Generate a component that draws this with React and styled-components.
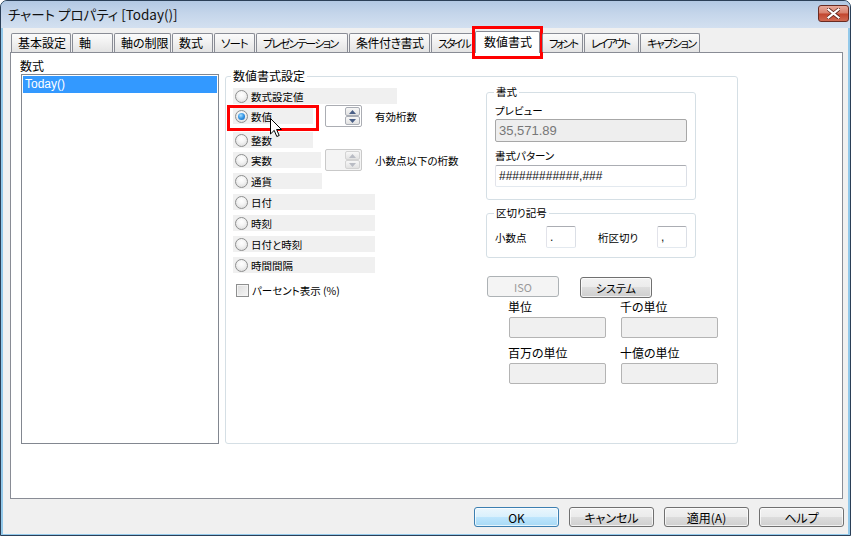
import React from 'react';
import styled, { createGlobalStyle, css } from 'styled-components';

const GlobalStyle = createGlobalStyle`
  html, body {
    margin: 0;
    padding: 0;
    background: #fff;
  }
  body {
    font-family: "Noto Sans CJK JP", "Noto Sans", sans-serif;
    font-size: 12px;
    color: #000;
    font-feature-settings: "palt";
  }
  * {
    box-sizing: border-box;
  }
`;

const tabs = [
  { label: '基本設定', w: 61 },
  { label: '軸', w: 42 },
  { label: '軸の制限', w: 58 },
  { label: '数式', w: 42 },
  { label: 'ソート', w: 42, fs: 11.5, ls: -1 },
  { label: 'プレゼンテーション', w: 93, fs: 11, ls: -1.6 },
  { label: '条件付き書式', w: 82, ls: -0.5 },
  { label: 'スタイル', w: 44, fs: 11, ls: -2 },
  { label: '数値書式', w: 65, active: true },
  { label: 'フォント', w: 42, fs: 11, ls: -2 },
  { label: 'レイアウト', w: 56, fs: 11, ls: -2 },
  { label: 'キャプション', w: 61, fs: 11, ls: -1.5 },
];

const options = [
  { label: '数式設定値', w: 164, mt: 0 },
  { label: '数値', w: 80, mt: 4, checked: true, spin: 'on', note: '有効桁数', mark: true },
  { label: '整数', w: 80, mt: 8 },
  { label: '実数', w: 88, mt: 4, spin: 'off', note: '小数点以下の桁数' },
  { label: '通貨', w: 89, mt: 5 },
  { label: '日付', w: 142, mt: 5 },
  { label: '時刻', w: 142, mt: 5 },
  { label: '日付と時刻', w: 142, mt: 5 },
  { label: '時間間隔', w: 142, mt: 5 },
];

const units = [
  { label: '単位', mt: 0 },
  { label: '千の単位', mt: 0 },
  { label: '百万の単位', mt: 8 },
  { label: '十億の単位', mt: 8 },
];

const Window = styled.div`
  width: 851px;
  height: 536px;
  border: 1px solid #2b3f57;
  border-radius: 7px 7px 0 0;
  background: #93c9ea;
  display: flex;
  flex-direction: column;
  overflow: hidden;
`;

const TitleBar = styled.div`
  height: 27px;
  flex: none;
  display: flex;
  justify-content: space-between;
  padding-left: 7px;
  background: linear-gradient(to bottom, #b2c8e3 0%, #c4d5ea 45%, #d3e0f0 100%);
`;

const Title = styled.div`
  font-size: 13.5px;
  line-height: 27px;
  color: #111;
`;

const CloseButton = styled.div`
  width: 31px;
  height: 17px;
  margin: 4px 1px 0 0;
  border: 1px solid #6a2b22;
  border-radius: 3px;
  background: linear-gradient(to bottom, #e8aa9c 0%, #d8806c 48%, #c2452e 52%, #d06a52 100%);
  display: flex;
  align-items: center;
  justify-content: center;
`;

const Body = styled.div`
  flex: 1;
  margin: 0 2px 1px;
  background: #f0f0f0;
  display: flex;
  flex-direction: column;
  padding: 3px 4px 0 7px;
`;

const TabRow = styled.div`
  display: flex;
  align-items: flex-end;
  margin-left: 1px;
  height: 21px;
  position: relative;
  z-index: 1;
`;

const Tab = styled.div`
  position: relative;
  width: ${(p) => p.$w - 1}px;
  height: 19px;
  margin-right: 1px;
  padding-left: 6px;
  border: 1px solid #898c95;
  border-bottom: none;
  border-radius: 2px 2px 0 0;
  background: linear-gradient(to bottom, #fbfbfb 0%, #f0f0f0 50%, #e3e3e3 100%);
  font-size: ${(p) => p.$fs || 12}px;
  line-height: 18px;
  letter-spacing: ${(p) => p.$ls || 0}px;
  white-space: nowrap;
  ${(p) =>
    p.$active &&
    css`
      width: ${p.$w}px;
      height: 22px;
      margin: 0 2px -1px 0;
      padding-left: 8px;
      background: #fff;
      line-height: 19px;
    `}
`;

const Highlight = styled.div`
  position: absolute;
  top: ${(p) => p.$t}px;
  left: ${(p) => p.$l}px;
  right: ${(p) => p.$r}px;
  bottom: ${(p) => p.$b}px;
  border: 3px solid #f00;
  pointer-events: none;
`;

const Panel = styled.div`
  height: 447px;
  margin-right: 1px;
  border: 1px solid #898c95;
  background: #fff;
  padding: 4px 0 0 9px;
  display: grid;
  grid-template-columns: 199px 513px;
  column-gap: 6px;
  align-items: start;
`;

const Column = styled.div`
  display: flex;
  flex-direction: column;
`;

const Caption = styled.div`
  line-height: 17px;
`;

const ListBox = styled.div`
  height: 370px;
  margin-left: 1px;
  border: 1px solid #828790;
  padding: 1px;
`;

const ListItem = styled.div`
  height: 17px;
  padding-left: 2px;
  line-height: 17px;
  font-family: "Liberation Sans", Arial, sans-serif;
  font-size: 12px;
  background: ${(p) => (p.$selected ? '#3399ff' : 'transparent')};
  color: ${(p) => (p.$selected ? '#fff' : '#000')};
`;

const Group = styled.fieldset`
  margin: ${(p) => p.$mt || 0}px 0 0;
  padding: 0 ${(p) => p.$px || 0}px;
  width: ${(p) => p.$w}px;
  height: ${(p) => p.$h}px;
  min-width: 0;
  border: 1px solid #d5dfe5;
  border-radius: 3px;
  font-size: 10.5px;
`;

const Legend = styled.legend`
  margin-left: ${(p) => p.$ml || 5}px;
  padding: 0 2px;
  line-height: 14px;
  font-size: ${(p) => p.$fs || 10.5}px;
`;

const FormatGrid = styled.div`
  display: grid;
  grid-template-columns: 253px 234px;
  padding: 2px 0 0 7px;
`;

const OptionList = styled.div`
  display: flex;
  flex-direction: column;
  padding-top: 3px;
`;

const OptionRow = styled.div`
  display: flex;
  align-items: center;
  height: 16px;
  margin-top: ${(p) => p.$mt}px;
`;

const OptionLabel = styled.div`
  position: relative;
  width: ${(p) => p.$w}px;
  height: 16px;
  flex: none;
  display: flex;
  align-items: center;
  padding-left: 2px;
  background: #f0f0f0;
  white-space: nowrap;
`;

const Radio = styled.span`
  width: 13px;
  height: 13px;
  flex: none;
  margin-right: 3px;
  border-radius: 50%;
  border: 1px solid #8e8f8f;
  background: radial-gradient(circle at 50% 35%, #ffffff 0%, #f4f4f4 40%, #d6d6d6 100%);
  display: flex;
  align-items: center;
  justify-content: center;
  &::after {
    content: '';
    display: ${(p) => (p.$checked ? 'block' : 'none')};
    width: 7px;
    height: 7px;
    border-radius: 50%;
    background: radial-gradient(circle at 40% 35%, #a9e0ff 0%, #3c9be8 45%, #0b5cb0 100%);
  }
`;

const Spin = styled.div`
  width: 37px;
  height: 22px;
  flex: none;
  margin-left: ${(p) => p.$ml}px;
  border: 1px solid ${(p) => (p.$off ? '#c9c9c9' : '#abadb3')};
  border-radius: 2px;
  background: ${(p) => (p.$off ? '#f4f4f4' : '#fff')};
  display: flex;
  justify-content: flex-end;
  padding: 1px 1px 1px 0;
`;

const SpinButtons = styled.div`
  width: 15px;
  display: flex;
  flex-direction: column;
`;

const SpinButton = styled.div`
  flex: 1;
  border: 1px solid ${(p) => (p.$off ? '#d3d3d3' : '#a9adb5')};
  border-radius: 2px;
  background: linear-gradient(to bottom, #f7f7f7, #e2e2e2);
  display: flex;
  align-items: center;
  justify-content: center;
`;

const Note = styled.span`
  margin-left: 13px;
  white-space: nowrap;
`;

const CheckRow = styled.div`
  display: flex;
  align-items: center;
  height: 14px;
  margin-top: 10px;
  padding-left: 3px;
  white-space: nowrap;
`;

const CheckBox = styled.span`
  width: 13px;
  height: 13px;
  margin-right: 3px;
  border: 1px solid #8e8f8f;
  background: linear-gradient(135deg, #dcdcdc 0%, #f6f6f6 100%);
  box-shadow: inset 0 0 0 1px #f4f4f4;
`;

const Cursor = styled.svg`
  position: absolute;
  left: 37px;
  top: 10px;
  z-index: 2;
`;

const SideColumn = styled.div`
  display: flex;
  flex-direction: column;
`;

const FieldLabel = styled.div`
  line-height: 14px;
  margin-top: ${(p) => p.$mt}px;
  font-size: ${(p) => p.$fs || 10.5}px;
  white-space: nowrap;
`;

const TextBox = styled.div`
  height: ${(p) => p.$h || 22}px;
  width: ${(p) => (p.$w ? `${p.$w}px` : 'auto')};
  margin-top: ${(p) => p.$mt || 0}px;
  margin-left: ${(p) => p.$ml || 0}px;
  flex: none;
  border: 1px solid;
  border-color: #abadb3 #dbdfe6 #e3e9ef #e2e3ea;
  border-radius: 2px;
  background: #fff;
  padding-left: 3px;
  font-family: "Liberation Sans", Arial, sans-serif;
  font-size: 12px;
  display: flex;
  align-items: center;
  color: #111;
  ${(p) =>
    p.$readonly &&
    css`
      border-color: #a7a7a7;
      background: #eeeeee;
      color: #777;
      font-size: 13px;
    `}
  ${(p) =>
    p.$disabled &&
    css`
      border-color: #b4b4b4;
      background: #f0f0f0;
    `}
`;

const SeparatorRow = styled.div`
  display: flex;
  align-items: center;
  margin-top: 6px;
`;

const InlineLabel = styled.span`
  width: ${(p) => p.$w}px;
  margin-left: ${(p) => p.$ml || 0}px;
  flex: none;
`;

const Button = styled.button`
  width: ${(p) => p.$w || 85}px;
  height: ${(p) => p.$h || 20}px;
  margin-left: ${(p) => p.$ml || 0}px;
  margin-top: ${(p) => p.$mt || 0}px;
  padding: 0;
  border: 1px solid #707070;
  border-radius: 3px;
  font-family: "Noto Sans CJK JP", sans-serif;
  font-feature-settings: "palt";
  font-size: ${(p) => p.$fs || 12}px;
  color: #000;
  background: linear-gradient(to bottom, #f2f2f2 0%, #ebebeb 50%, #dddddd 50%, #cfcfcf 100%);
  box-shadow: inset 0 0 0 1px rgba(255, 255, 255, 0.7);
  ${(p) =>
    p.$default &&
    css`
      border-color: #3c7fb1;
      background: linear-gradient(to bottom, #eaf6fd 0%, #d9f0fc 50%, #bee6fd 50%, #a7d9f5 100%);
    `}
  &:disabled {
    border-color: #adb2b5;
    background: #f4f4f4;
    color: #9a9a9a;
    box-shadow: none;
  }
`;

const ButtonRow = styled.div`
  display: flex;
  margin-top: 18px;
`;

const UnitGrid = styled.div`
  display: grid;
  grid-template-columns: 98px 98px;
  column-gap: 14px;
  padding-left: 22px;
  margin-top: 2px;
`;

const UnitCell = styled.div`
  display: flex;
  flex-direction: column;
  margin-top: ${(p) => p.$mt || 0}px;
`;

const Footer = styled.div`
  display: flex;
  justify-content: flex-end;
  gap: 10px;
  margin-top: 8px;
`;

const Arrow = ({ up, off }) => (
  <svg width="7" height="4" viewBox="0 0 7 4">
    <polygon
      points={up ? '0,4 3.5,0 7,4' : '0,0 3.5,4 7,0'}
      fill={off ? '#b9bcc4' : '#4a5f86'}
    />
  </svg>
);

const SpinBox = ({ ml, off }) => (
  <Spin $ml={ml} $off={off}>
    <SpinButtons>
      <SpinButton $off={off}>
        <Arrow up off={off} />
      </SpinButton>
      <SpinButton $off={off}>
        <Arrow off={off} />
      </SpinButton>
    </SpinButtons>
  </Spin>
);

export default function App() {
  return (
    <>
      <GlobalStyle />
      <Window>
        <TitleBar>
          <Title>チャート プロパティ [Today()]</Title>
          <CloseButton>
            <svg width="13" height="11" viewBox="0 0 13 11">
              <path
                d="M1.5 1.5 L11.5 9.5 M11.5 1.5 L1.5 9.5"
                stroke="#5a2018"
                strokeWidth="3.6"
                strokeLinecap="square"
              />
              <path
                d="M1.5 1.5 L11.5 9.5 M11.5 1.5 L1.5 9.5"
                stroke="#fff"
                strokeWidth="2.2"
                strokeLinecap="square"
              />
            </svg>
          </CloseButton>
        </TitleBar>
        <Body>
          <TabRow>
            {tabs.map((t) => (
              <Tab key={t.label} $w={t.w} $fs={t.fs} $ls={t.ls} $active={t.active}>
                {t.label}
                {t.active && <Highlight $t={-6} $l={-4} $r={-4} $b={-6} />}
              </Tab>
            ))}
          </TabRow>
          <Panel>
            <Column>
              <Caption>数式</Caption>
              <ListBox>
                <ListItem $selected>Today()</ListItem>
              </ListBox>
            </Column>
            <Group $mt={12} $w={513} $h={375}>
              <Legend $fs={12}>数値書式設定</Legend>
              <FormatGrid>
                <OptionList>
                  {options.map((o) => (
                    <OptionRow key={o.label} $mt={o.mt}>
                      <OptionLabel $w={o.w}>
                        <Radio $checked={o.checked} />
                        {o.label}
                        {o.mark && (
                          <>
                            <Highlight $t={-3} $l={-6} $r={-6} $b={-7} />
                            <Cursor width="13" height="20" viewBox="0 0 13 20">
                              <path
                                d="M0.5 0.5 L0.5 16 L4.2 12.4 L6.8 18.5 L9.2 17.5 L6.6 11.5 L11.5 11.5 Z"
                                fill="#fff"
                                stroke="#000"
                                strokeWidth="1"
                              />
                            </Cursor>
                          </>
                        )}
                      </OptionLabel>
                      {o.spin && (
                        <>
                          <SpinBox ml={92 - o.w} off={o.spin === 'off'} />
                          <Note>{o.note}</Note>
                        </>
                      )}
                    </OptionRow>
                  ))}
                  <CheckRow>
                    <CheckBox />
                    パーセント表示 (%)
                  </CheckRow>
                </OptionList>
                <SideColumn>
                  <Group $w={210} $h={115} $px={8}>
                    <Legend $ml={-1}>書式</Legend>
                    <FieldLabel $mt={5}>プレビュー</FieldLabel>
                    <TextBox $readonly $h={23} $mt={1}>
                      35,571.89
                    </TextBox>
                    <FieldLabel $mt={7}>書式パターン</FieldLabel>
                    <TextBox $mt={2}>############,###</TextBox>
                  </Group>
                  <Group $mt={6} $w={210} $h={52} $px={8}>
                    <Legend $ml={-1}>区切り記号</Legend>
                    <SeparatorRow>
                      <InlineLabel $w={51}>小数点</InlineLabel>
                      <TextBox $w={30}>.</TextBox>
                      <InlineLabel $w={59} $ml={22}>
                        桁区切り
                      </InlineLabel>
                      <TextBox $w={30}>,</TextBox>
                    </SeparatorRow>
                  </Group>
                  <ButtonRow>
                    <Button $w={72} $h={21} $ml={1} $fs={11} disabled>
                      ISO
                    </Button>
                    <Button $w={72} $h={21} $ml={21} $mt={1} $fs={11}>
                      システム
                    </Button>
                  </ButtonRow>
                  <UnitGrid>
                    {units.map((u) => (
                      <UnitCell key={u.label} $mt={u.mt}>
                        <FieldLabel $mt={0} $fs={12}>
                          {u.label}
                        </FieldLabel>
                        <TextBox $disabled $h={21} $mt={3} $ml={1} />
                      </UnitCell>
                    ))}
                  </UnitGrid>
                </SideColumn>
              </FormatGrid>
            </Group>
          </Panel>
          <Footer>
            <Button $default>OK</Button>
            <Button>キャンセル</Button>
            <Button>適用(A)</Button>
            <Button>ヘルプ</Button>
          </Footer>
        </Body>
      </Window>
    </>
  );
}
